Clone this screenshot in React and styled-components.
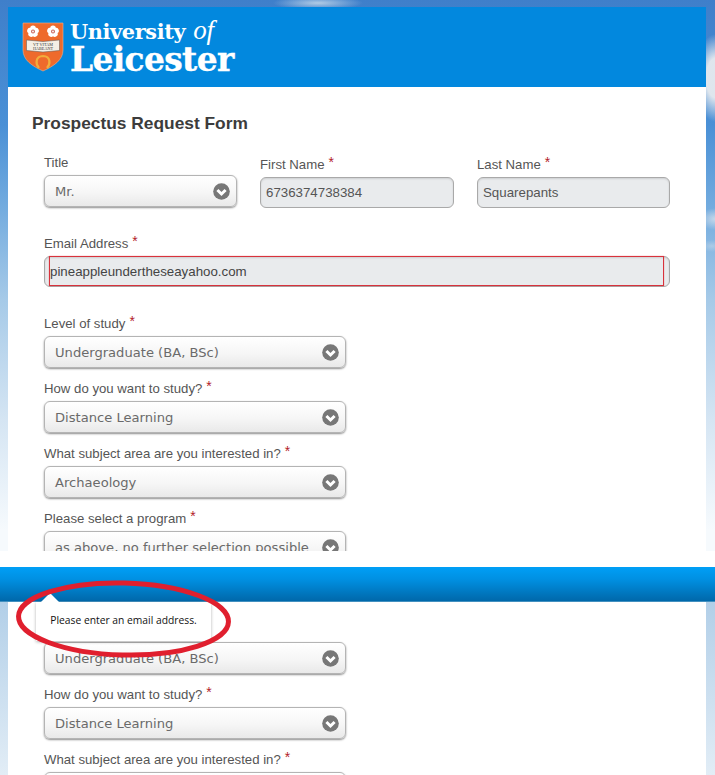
import React from "react";
import styled, { createGlobalStyle } from "styled-components";

const Global = createGlobalStyle`
  html, body { margin: 0; padding: 0; height: 775px; overflow: hidden; background: #fff; }
  body { font-family: "Liberation Sans", Arial, sans-serif; }
`;

const Page = styled.div`
  width: 715px;
  height: 775px;
  display: flex;
  flex-direction: column;
`;

const sky = `
  radial-gradient(ellipse 45px 7px at 318px 3px, rgba(205,222,235,.8), rgba(205,222,235,0)),
  radial-gradient(ellipse 22px 44px at 716px 78px, rgba(226,232,238,.98) 45%, rgba(226,232,238,0)),
  radial-gradient(ellipse 18px 11px at 716px 219px, rgba(226,232,238,.75), rgba(226,232,238,0)),
  radial-gradient(ellipse 12px 6px at 712px 246px, rgba(226,232,238,.4), rgba(226,232,238,0)),
  linear-gradient(180deg, #3f7fca 0, #4a90d6 125px, #6fa9de 200px, #a6cae8 300px, #d5e5f3 420px, #f6fafd 530px)
`;

const TopShot = styled.section`
  height: 551px;
  flex: none;
  overflow: hidden;
  box-sizing: border-box;
  padding: 7px 9px 0 8px;
  background: ${sky};
`;

const Gap = styled.div`
  height: 16px;
  flex: none;
  background: #fff;
`;

const BottomShot = styled.section`
  position: relative;
  height: 208px;
  flex: none;
  overflow: hidden;
  background: linear-gradient(180deg, #b2cfe8 35px, #e2edf6 208px);
`;

const Masthead = styled.header`
  height: 80px;
  background: #0288de;
  display: flex;
  align-items: center;
  gap: 6px;
  padding: 0 0 0 14px;
`;

const Wordmark = styled.div`
  color: #fff;
  display: flex;
  flex-direction: column;
  margin-top: -1px;
`;

const WordTop = styled.div`
  font-family: "DejaVu Serif", "Liberation Serif", serif;
  font-weight: 700;
  font-size: 20.8px;
  line-height: 24px;
  letter-spacing: -0.35px;
  em {
    font-family: "Liberation Serif", serif;
    font-weight: 400;
    font-size: 27px;
    line-height: 24px;
    margin-left: 8px;
  }
`;

const WordBottom = styled.div`
  font-family: "DejaVu Serif", "Liberation Serif", serif;
  font-weight: 700;
  font-size: 32.8px;
  line-height: 31px;
  letter-spacing: -0.6px;
  -webkit-text-stroke: 0.4px #fff;
`;

const Card = styled.main`
  background: #fff;
  padding: 24px 36px 0 36px;
  height: 480px;
`;

const Heading = styled.h1`
  margin: 0 0 20px -12px;
  font-size: 17.35px;
  line-height: 24px;
  font-weight: 700;
  color: #3c3c3c;
`;

const NameRow = styled.div`
  display: grid;
  grid-template-columns: 193px 194px 193px;
  column-gap: 23px;
  margin-bottom: 28px;
`;

const Field = styled.div`
  padding-top: ${(p) => p.$drop || 0}px;
  margin-bottom: ${(p) => p.$after || 0}px;
  width: ${(p) => (p.$narrow ? "302px" : "auto")};
`;

const Label = styled.label`
  display: block;
  height: 16px;
  font-size: 13.2px;
  line-height: 16px;
  color: #555;
  margin-bottom: 4px;
  white-space: nowrap;
`;

const Star = styled.span`
  color: #b3202a;
  font-size: 14px;
  line-height: 10px;
  margin-left: 4px;
  position: relative;
  top: -2px;
`;

const SelectBox = styled.div`
  box-sizing: border-box;
  height: 32px;
  display: flex;
  align-items: center;
  justify-content: space-between;
  padding: 0 6px 0 10px;
  border: 1px solid #b4b4b4;
  border-radius: 6px;
  background: linear-gradient(180deg, #fff 0, #f6f6f6 55%, #e9e9e9 100%);
  box-shadow: 0 1px 2px rgba(0, 0, 0, 0.45);
  font-family: "DejaVu Sans", Verdana, sans-serif;
  font-size: 13.1px;
  color: #6a6a6a;
  white-space: nowrap;
`;

const TextBox = styled.div`
  box-sizing: border-box;
  height: 31px;
  display: flex;
  align-items: center;
  padding: 0 5px;
  border: 1px solid #a9a9a9;
  border-radius: 6px;
  background: #e9ebed;
  box-shadow: inset 0 1px 2px rgba(0, 0, 0, 0.12);
  font-size: 13.3px;
  color: #555;
`;

const EmailBox = styled(TextBox)`
  padding: 0 5px 0 4px;
  align-items: stretch;
  color: #444;
`;

const InvalidMark = styled.div`
  flex: 1;
  border: 1px solid #d8323c;
  margin: -1px 0 0;
  display: flex;
  align-items: center;
  box-shadow: 0 0 1px rgba(216, 50, 60, 0.6);
`;

const Bar = styled.div`
  height: 35px;
  background: linear-gradient(180deg, #009ff6 0, #0090e2 35%, #0068aa 97%, #7fb4d2 100%);
`;

const BottomCard = styled.div`
  margin: 0 9px 0 8px;
  padding: 40px 0 0 36px;
  background: #fff;
  height: 173px;
`;

const Tooltip = styled.div`
  position: absolute;
  left: 36px;
  top: 35px;
  width: 175px;
  height: 39px;
  box-sizing: border-box;
  padding-bottom: 3px;
  display: flex;
  align-items: center;
  justify-content: center;
  background: #fff;
  box-shadow: 0 1px 3px rgba(0, 0, 0, 0.3);
  font-family: "Open Sans", "Noto Sans", sans-serif;
  font-size: 10.3px;
  color: #111;
  white-space: nowrap;
  &::before {
    content: "";
    position: absolute;
    left: 5px;
    top: -9px;
    border-left: 9px solid transparent;
    border-right: 9px solid transparent;
    border-bottom: 9px solid #fff;
  }
`;

const Annotation = styled.svg`
  position: absolute;
  left: 0;
  top: 0;
  pointer-events: none;
`;

const Chevron = () => (
  <svg width="17" height="17" viewBox="0 0 17 17" style={{ flex: "none" }}>
    <circle cx="8.5" cy="8.5" r="8.3" fill="#777" />
    <path d="M4.400 7 8.500 11l4.100-4" fill="none" stroke="#fff" strokeWidth="3" strokeLinecap="butt" />
  </svg>
);

const Rose = ({ x, y }) => (
  <g transform={`translate(${x} ${y})`}>
    {[0, 72, 144, 216, 288].map((a) => (
      <circle key={a} cx="0" cy="-3.2" r="2.8" fill="#fff" transform={`rotate(${a})`} />
    ))}
    <circle r="2" fill="#c9655a" />
    <circle r=".9" fill="#fff" />
  </g>
);

const Shield = () => (
  <svg width="42" height="50" viewBox="0 0 42 50" style={{ flex: "none" }}>
    <path d="M1 1h40v27c0 10-9 16-20 21C10 44 1 38 1 28Z" fill="#ee6a2c" stroke="#f5b08a" strokeWidth=".6" />
    <Rose x="11" y="9.500" />
    <Rose x="31" y="9.500" />
    <path d="M4.500 18 21 19.500 37.500 18v10.500L21 30 4.500 28.500Z" fill="#f4efe6" stroke="#555" strokeWidth=".5" />
    <text x="21" y="23.800" textAnchor="middle" fontSize="4.200" fontFamily="Liberation Serif, serif" fill="#333">VT VITAM</text>
    <text x="21" y="28.300" textAnchor="middle" fontSize="4.200" fontFamily="Liberation Serif, serif" fill="#333">HABEANT</text>
    <path d="M17 46c-3.500-4-4-11.500 4-12 8 .5 7.500 8 4 12" fill="none" stroke="#f2ad3c" strokeWidth="2.200" />
  </svg>
);

const Pick = ({ label, value, after }) => (
  <Field $narrow $after={after}>
    <Label>
      {label}
      <Star>*</Star>
    </Label>
    <SelectBox>
      {value}
      <Chevron />
    </SelectBox>
  </Field>
);

export default function App() {
  return (
    <Page>
      <Global />
      <TopShot>
        <Masthead>
          <Shield />
          <Wordmark>
            <WordTop>
              University<em>of</em>
            </WordTop>
            <WordBottom>Leicester</WordBottom>
          </Wordmark>
        </Masthead>
        <Card>
          <Heading>Prospectus Request Form</Heading>
          <NameRow>
            <Field>
              <Label>Title</Label>
              <SelectBox>
                Mr.
                <Chevron />
              </SelectBox>
            </Field>
            <Field $drop={2}>
              <Label>
                First Name<Star>*</Star>
              </Label>
              <TextBox>6736374738384</TextBox>
            </Field>
            <Field $drop={2}>
              <Label>
                Last Name<Star>*</Star>
              </Label>
              <TextBox>Squarepants</TextBox>
            </Field>
          </NameRow>
          <Field $after={29}>
            <Label>
              Email Address<Star>*</Star>
            </Label>
            <EmailBox>
              <InvalidMark>pineappleundertheseayahoo.com</InvalidMark>
            </EmailBox>
          </Field>
          <Pick label="Level of study" value="Undergraduate (BA, BSc)" after={13} />
          <Pick label="How do you want to study?" value="Distance Learning" after={13} />
          <Pick label="What subject area are you interested in?" value="Archaeology" after={13} />
          <Pick label="Please select a program" value="as above, no further selection possible" />
        </Card>
      </TopShot>
      <Gap />
      <BottomShot>
        <Bar />
        <BottomCard>
          <Field $narrow $after={13}>
            <SelectBox>
              Undergraduate (BA, BSc)
              <Chevron />
            </SelectBox>
          </Field>
          <Pick label="How do you want to study?" value="Distance Learning" after={13} />
          <Pick label="What subject area are you interested in?" value="Archaeology" />
        </BottomCard>
        <Tooltip>Please enter an email address.</Tooltip>
        <Annotation width="715" height="208" viewBox="0 0 715 208">
          <ellipse cx="123.500" cy="52" rx="105" ry="36" fill="none" stroke="#e01f2e" strokeWidth="5" transform="rotate(1.500 123.500 52)" />
        </Annotation>
      </BottomShot>
    </Page>
  );
}
